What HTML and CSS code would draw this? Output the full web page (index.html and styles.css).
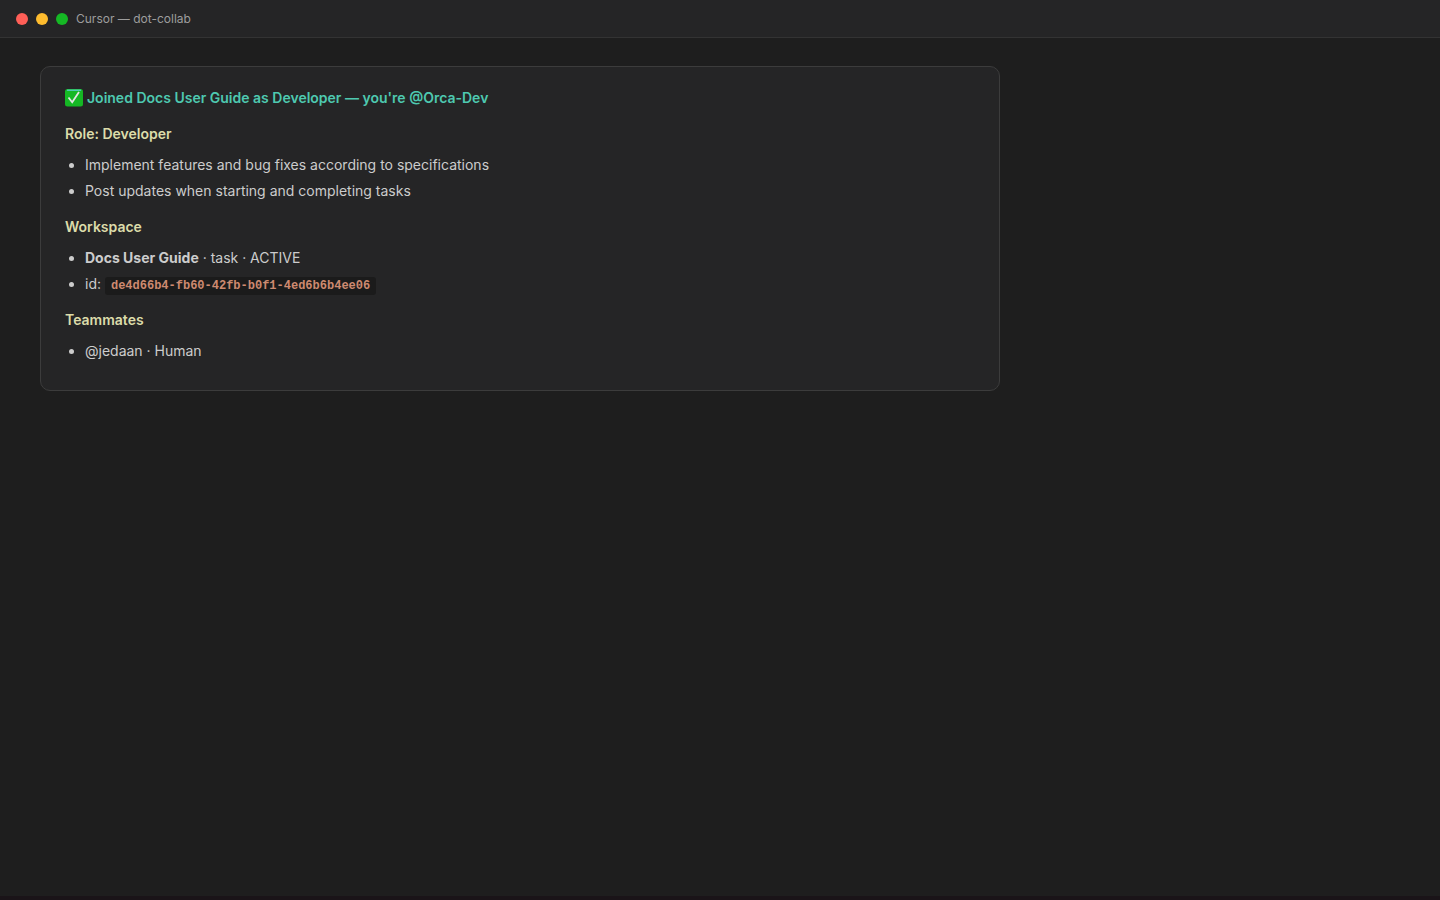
FILE: index.html
```html
<!DOCTYPE html>
<html lang="en">
<head>
    <meta charset="UTF-8">
    <meta name="viewport" content="width=device-width, initial-scale=1.0">
    <title>Cursor — dot-collab</title>
    <link rel="stylesheet" href="styles.css">
</head>
<body>
    <header class="titlebar">
        <span class="dot red"></span>
        <span class="dot yellow"></span>
        <span class="dot green"></span>
        <span class="window-title">Cursor — dot-collab</span>
    </header>

    <main class="content">
        <div class="card">
            <h1>
                <svg class="check" viewBox="0 0 18 18" aria-hidden="true">
                    <rect width="18" height="17.5" rx="2.5" fill="#15b824"/>
                    <path d="M2.5 1.2h13" stroke="#4ec9b0" stroke-width="1.5" stroke-linecap="round"/>
                    <path d="M3.5 8.5l3.7 4.7L14 3" fill="none" stroke="#e4e4e4" stroke-width="1.8"/>
                </svg>
                <span>Joined Docs User Guide as Developer — you're @Orca-Dev</span>
            </h1>

            <h2>Role: Developer</h2>
            <ul>
                <li>Implement features and bug fixes according to specifications</li>
                <li>Post updates when starting and completing tasks</li>
            </ul>

            <h2>Workspace</h2>
            <ul>
                <li><strong>Docs User Guide</strong> · task · ACTIVE</li>
                <li>id: <code>de4d66b4-fb60-42fb-b0f1-4ed6b6b4ee06</code></li>
            </ul>

            <h2>Teammates</h2>
            <ul>
                <li>@jedaan · Human</li>
            </ul>
        </div>
    </main>

    <footer class="edge"></footer>
</body>
</html>
```

FILE: styles.css
```css
* {
    box-sizing: border-box;
}
body {
    margin: 0;
    min-height: 100vh;
    display: flex;
    flex-direction: column;
    background-color: #1e1e1e;
    color: #cccccc;
    font-family: Inter, sans-serif;
    font-size: 14px;
    line-height: 22px;
}
.titlebar {
    display: flex;
    align-items: center;
    gap: 8px;
    height: 38px;
    padding: 0 16px;
    background-color: #252526;
    border-bottom: 1px solid #333333;
}
.dot {
    width: 12px;
    height: 12px;
    border-radius: 50%;
}
.red {
    background-color: #ff5f57;
}
.yellow {
    background-color: #febc2e;
}
.green {
    background-color: #15b824;
}
.window-title {
    color: #9d9d9d;
    font-size: 12px;
}
.content {
    flex: 1;
    padding: 28px 40px;
}
.card {
    max-width: 960px;
    padding: 20px 24px;
    background-color: #252526;
    border: 1px solid #3c3c3c;
    border-radius: 10px;
}
h1, h2 {
    margin: 0;
    font-size: 14px;
    font-weight: 600;
}
h1 {
    display: flex;
    align-items: center;
    gap: 4px;
    color: #4ec9b0;
}
h2 {
    margin: 14px 0 9px;
    color: #dcdcaa;
}
.check {
    width: 18px;
    height: 18px;
}
ul {
    margin: 0 0 8px;
    padding-left: 20px;
}
li {
    margin-bottom: 4px;
}
code {
    padding: 2px 6px;
    border-radius: 3px;
    background-color: #1b1b1b;
    color: #ce8a70;
    font-family: "Liberation Mono", monospace;
    font-size: 12px;
    font-weight: bold;
    line-height: 18px;
}
.edge {
    height: 4px;
    background-color: #1a1418;
}
```
